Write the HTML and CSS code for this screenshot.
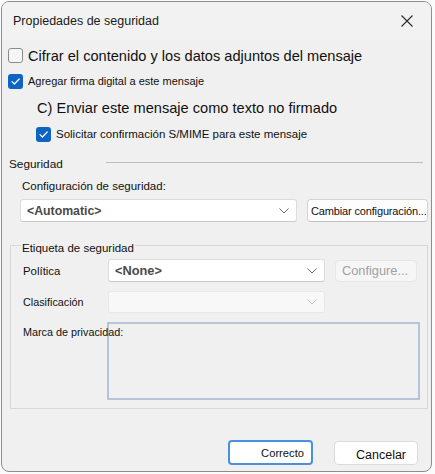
FILE: index.html
```html
<!DOCTYPE html>
<html lang="es">
<head>
<meta charset="utf-8">
<title>Propiedades de seguridad</title>
<link rel="stylesheet" href="styles.css">
</head>
<body>
<div class="window">
  <div class="titlebar">
    <span class="title">Propiedades de seguridad</span>
    <span class="close">
      <svg width="12" height="12" viewBox="0 0 12 12"><path d="M0.5 0.5 L11.5 11.5 M11.5 0.5 L0.5 11.5" stroke="#2b2b2b" stroke-width="1.1" fill="none"/></svg>
    </span>
  </div>
  <div class="content">
    <div class="row r1">
      <span class="cb"></span>
      <span class="big">Cifrar el contenido y los datos adjuntos del mensaje</span>
    </div>
    <div class="row r2">
      <span class="cb checked"><svg width="15" height="15" viewBox="0 0 15 15"><path d="M4 7.6 L6.4 10 L11.2 5" stroke="#fff" stroke-width="1.2" fill="none" stroke-linecap="round" stroke-linejoin="round"/></svg></span>
      <span class="small t-agregar">Agregar firma digital a este mensaje</span>
    </div>
    <div class="row r3">
      <span class="big">C) Enviar este mensaje como texto no firmado</span>
    </div>
    <div class="row r4">
      <span class="cb checked"><svg width="15" height="15" viewBox="0 0 15 15"><path d="M4 7.6 L6.4 10 L11.2 5" stroke="#fff" stroke-width="1.2" fill="none" stroke-linecap="round" stroke-linejoin="round"/></svg></span>
      <span class="small t-solicitar">Solicitar confirmación S/MIME para este mensaje</span>
    </div>
    <div class="row r5">
      <span class="section">Seguridad</span>
      <span class="rule"></span>
    </div>
    <div class="row r6">
      <span class="small">Configuración de seguridad:</span>
    </div>
    <div class="row r7">
      <div class="combo combo-auto">
        <span class="combo-val">&lt;Automatic&gt;</span>
        <svg class="chev" width="10" height="6" viewBox="0 0 10 6"><path d="M0.5 0.5 L5 5 L9.5 0.5" stroke="#6b6b6b" stroke-width="1" fill="none"/></svg>
      </div>
      <div class="btn btn-cambiar"><span>Cambiar configuración...</span></div>
    </div>
    <div class="group">
      <span class="legend">Etiqueta de seguridad</span>
      <div class="grow g1">
        <span class="glabel">Política</span>
        <div class="combo combo-g">
          <span class="combo-val none">&lt;None&gt;</span>
          <svg class="chev" width="10" height="6" viewBox="0 0 10 6"><path d="M0.5 0.5 L5 5 L9.5 0.5" stroke="#6b6b6b" stroke-width="1" fill="none"/></svg>
        </div>
        <div class="btn btn-configure"><span>Configure...</span></div>
      </div>
      <div class="grow g2">
        <span class="glabel">Clasificación</span>
        <div class="combo combo-g disabled">
          <svg class="chev" width="10" height="6" viewBox="0 0 10 6"><path d="M0.5 0.5 L5 5 L9.5 0.5" stroke="#c4c4c4" stroke-width="1" fill="none"/></svg>
        </div>
      </div>
      <div class="grow g3">
        <span class="glabel mark">Marca de privacidad:</span>
        <div class="textbox"></div>
      </div>
    </div>
    <div class="buttons">
      <div class="btn btn-ok"><span>Correcto</span></div>
      <div class="btn btn-cancel"><span>Cancelar</span></div>
    </div>
  </div>
</div>
</body>
</html>
```
FILE: styles.css
```css
html, body {
  margin: 0;
  padding: 0;
  background: #fbfbfb;
}
body {
  font-family: "Liberation Sans", Arial, sans-serif;
  color: #111;
  width: 435px;
  height: 474px;
  overflow: hidden;
}
.window {
  margin: 1px 0 0 1px;
  width: 429px;
  height: 469px;
  border: 1px solid #8e8e8e;
  border-radius: 8px;
  background: #f0f0f0;
  box-sizing: content-box;
  overflow: hidden;
}
.titlebar {
  height: 38px;
  display: flex;
  align-items: center;
  padding-left: 11px;
  padding-right: 12px;
  background: #f2f2f2;
}
.title {
  font-size: 12.5px;
  flex: 1;
  color: #1a1a1a;
}
.close {
  display: flex;
  width: 12px;
  height: 12px;
  margin-right: 6px;
}
.content {
  padding-left: 6px;
}
.row {
  display: flex;
  align-items: center;
}
.big {
  font-size: 14.6px;
  color: #111;
}
.small {
  font-size: 11.5px;
  color: #111;
}
.cb {
  width: 15px;
  height: 15px;
  box-sizing: border-box;
  border: 1.5px solid #8a8a8a;
  border-radius: 3px;
  background: #f6f6f6;
  margin-right: 5px;
  flex: none;
  display: flex;
}
.cb.checked {
  border: none;
  background: #0d64c2;
}
.r1 { margin-top: 7px; height: 17px; }
.r2 { margin-top: 9px; height: 16px; }
.t-agregar { font-size: 11px; }
.r3 { margin-top: 10px; height: 18px; padding-left: 29px; }
.r4 { margin-top: 9px; height: 16px; padding-left: 28px; }
.t-solicitar { font-size: 11.5px; }
.r5 { margin-top: 14px; height: 16px; }
.section {
  font-size: 11.8px;
  padding-left: 1px;
}
.rule {
  margin-left: 43px;
  width: 317px;
  height: 1px;
  background: #bdbdbd;
  margin-top: -3px;
}
.r6 { margin-top: 6px; height: 16px; padding-left: 14px; }
.r7 { margin-top: 5px; height: 23px; padding-left: 12px; }
.combo {
  box-sizing: border-box;
  height: 23px;
  background: #fff;
  border: 1px solid #dcdcdc;
  border-bottom-color: #c8c8c8;
  border-radius: 3px;
  display: flex;
  align-items: center;
  padding-left: 6px;
  padding-right: 7px;
}
.combo-auto { width: 277px; }
.combo-val {
  flex: 1;
  font-weight: bold;
  font-size: 12.3px;
  color: #4a4a4a;
}
.combo-val.none { font-size: 12.8px; }
.chev { flex: none; margin-left: auto; }
.btn {
  box-sizing: border-box;
  background: #fdfdfd;
  border: 1px solid #d4d4d4;
  border-bottom-color: #c2c2c2;
  border-radius: 4px;
  display: flex;
  align-items: center;
  font-size: 12px;
  color: #111;
  overflow: hidden;
  white-space: nowrap;
}
.btn-cambiar {
  margin-left: 10px;
  width: 121px;
  height: 23px;
  padding-left: 3px;
  font-size: 11px;
  letter-spacing: -0.15px;
}
.group {
  margin-top: 23px;
  margin-left: 2px;
  width: 418px;
  height: 164px;
  box-sizing: border-box;
  border: 1px solid #d8d8d8;
  padding-left: 12px;
}
.legend {
  display: inline-block;
  margin-top: -4px;
  margin-left: -2px;
  padding: 0 1px;
  background: #f0f0f0;
  font-size: 11.5px;
  line-height: 13px;
  vertical-align: top;
}
.grow {
  display: flex;
  align-items: center;
}
.glabel {
  width: 85px;
  font-size: 11.4px;
  flex: none;
  white-space: nowrap;
  position: relative;
  z-index: 1;
}
.g1 { height: 23px; margin-top: -5px; }
.combo-g { width: 217px; }
.combo-g.disabled {
  height: 22px;
  background: #f8f8f8;
  border-color: #e8e8e8;
}
.btn-configure {
  margin-left: 10px;
  width: 82px;
  height: 22px;
  background: #f6f6f6;
  border-color: #e6e6e6;
  color: #a0a0a0;
  font-size: 12.8px;
  padding-left: 6px;
}
.g2 { margin-top: 9px; height: 22px; }
.g2 .glabel { font-size: 10.8px; }
.g3 {
  margin-top: 9px;
  align-items: flex-start;
}
.mark {
  font-size: 10.8px;
  margin-top: 4px;
}
.textbox {
  width: 313px;
  height: 78px;
  box-sizing: border-box;
  margin-left: -1px;
  border: 2px solid #b6c4d8;
  background: #f0f0f0;
}
.buttons {
  display: flex;
  margin-top: 31px;
  padding-left: 220px;
}
.btn-ok {
  width: 85px;
  height: 25px;
  border: 2px solid #4a90dc;
  background: #fff;
  justify-content: flex-end;
  padding-right: 7px;
  font-size: 11.2px;
}
.btn-cancel {
  margin-left: 21px;
  margin-top: 1px;
  width: 84px;
  height: 24px;
  border-color: #dadada;
  background: #fff;
  padding-left: 21px;
  font-size: 12.5px;
  padding-top: 3px;
}
```
